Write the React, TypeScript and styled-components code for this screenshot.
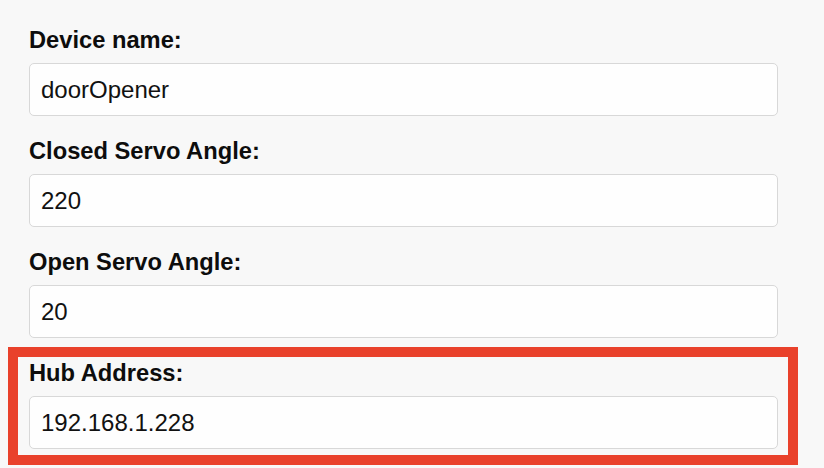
import styled, { createGlobalStyle } from "styled-components"

const GlobalStyle = createGlobalStyle`
    body {
        margin: 0;
        background: #f8f8f8;
        font-family: "Liberation Sans", Arial, sans-serif;
    }
`

const Form = styled.form`
    display: flex;
    flex-direction: column;
    gap: 13px;
    width: 770px;
    padding: 24px 0 24px 18px;
`

const Field = styled.div<{ $highlight?: boolean }>`
    display: flex;
    flex-direction: column;
    padding: 3px 10px 6px 11px;
    outline: ${(p) => (p.$highlight ? "10px solid #e9412b" : "none")};
`

const Label = styled.label`
    font-size: 23.7px;
    line-height: 26px;
    font-weight: bold;
    color: #0d0d0d;
    margin-bottom: 10px;
`

const Input = styled.input`
    box-sizing: border-box;
    height: 53px;
    width: 100%;
    padding: 0 11px;
    border: 1px solid #d8d8d8;
    border-radius: 5px;
    background: #fefefe;
    font-family: "Liberation Sans", Arial, sans-serif;
    font-size: 24px;
    color: #111;
    outline: none;
`

const fields = [
    { id: "name", label: "Device name:", value: "doorOpener" },
    { id: "closed", label: "Closed Servo Angle:", value: "220" },
    { id: "open", label: "Open Servo Angle:", value: "20" },
    { id: "hub", label: "Hub Address:", value: "192.168.1.228", highlight: true },
]

function App() {
    return <>
        <GlobalStyle />
        <Form onSubmit={(e) => e.preventDefault()}>
            {fields.map((f) => {
                return <Field key={f.id} $highlight={f.highlight}>
                    <Label htmlFor={f.id}>{f.label}</Label>
                    <Input id={f.id} type='text' defaultValue={f.value} />
                </Field>
            })}
        </Form>
    </>
}

export default App
